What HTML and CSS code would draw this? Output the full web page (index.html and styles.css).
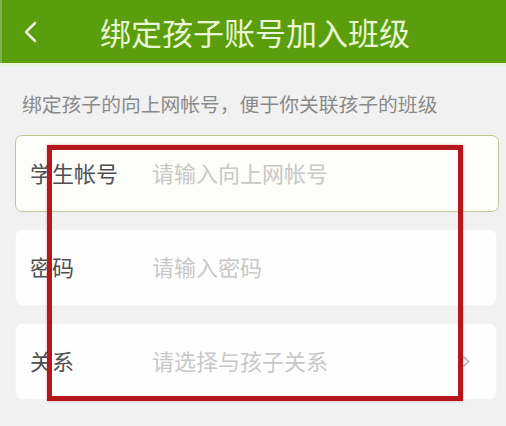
FILE: index.html
```html
<!DOCTYPE html>
<html lang="zh">
<head>
<meta charset="utf-8">
<link rel="stylesheet" href="styles.css">
</head>
<body>
<div class="page">
  <header class="topbar">
    <svg class="back" width="14" height="22" viewBox="0 0 14 22"><path d="M12 2 L3 11 L12 20" fill="none" stroke="#e6f4cf" stroke-width="2.6" stroke-linecap="round" stroke-linejoin="round"/></svg>
    <h1 class="title">绑定孩子账号加入班级</h1>
  </header>
  <div class="divider"></div>
  <p class="hint">绑定孩子的向上网帐号，便于你关联孩子的班级</p>
  <div class="form">
    <div class="field active">
      <span class="label">学生帐号</span>
      <span class="placeholder">请输入向上网帐号</span>
    </div>
    <div class="field">
      <span class="label">密码</span>
      <span class="placeholder">请输入密码</span>
    </div>
    <div class="field">
      <span class="label">关系</span>
      <span class="placeholder">请选择与孩子关系</span>
      <svg class="arrow" width="8" height="13" viewBox="0 0 8 13"><path d="M1.5 1.5 L6.5 6.5 L1.5 11.5" fill="none" stroke="#b0b0b0" stroke-width="1.6"/></svg>
    </div>
    <div class="highlight"></div>
  </div>
</div>
</body>
</html>
```
FILE: styles.css
```css
html, body {
  margin: 0;
  padding: 0;
}
body {
  width: 506px;
  height: 426px;
  overflow: hidden;
  background: #f1f1f1;
  font-family: "Noto Sans CJK SC", "Noto Sans", sans-serif;
}
.page {
  display: flex;
  flex-direction: column;
}
.topbar {
  height: 63px;
  background: #5b9e0d;
  display: flex;
  align-items: center;
  border-left: 2px solid #7fb24a;
}
.back {
  margin-left: 21px;
  margin-top: 1px;
}
.title {
  margin: 0 0 0 63px;
  font-size: 31px;
  font-weight: 400;
  color: #e9f6d4;
  letter-spacing: 0;
  line-height: 1;
}
.divider {
  height: 3px;
  background: #e6f3d6;
}
.hint {
  margin: 24px 0 0 22px;
  font-size: 19.8px;
  line-height: 28px;
  color: #8a8a8a;
}
.form {
  position: relative;
  margin: 17px 7px 0 15px;
  display: flex;
  flex-direction: column;
  gap: 17px;
}
.field {
  height: 77px;
  box-sizing: border-box;
  background: #fefefe;
  border-radius: 7px;
  border: 1px solid #f4f4f4;
  display: flex;
  align-items: center;
  padding: 0 0 4px 14px;
  margin-right: 2px;
}
.field.active {
  border: 1.5px solid #bccb94;
  background: #fdfdf9;
  margin-right: 0;
}
.label {
  width: 122px;
  font-size: 22px;
  color: #505050;
  flex-shrink: 0;
}
.placeholder {
  font-size: 22px;
  color: #c8c8c8;
  flex: 1;
}
.arrow {
  margin-right: 26px;
  margin-top: 4px;
}
.highlight {
  position: absolute;
  left: 32px;
  top: 10px;
  width: 406px;
  height: 246px;
  border: 5px solid #b5171d;
  box-shadow: 0 0 2px rgba(220, 60, 60, 0.5);
}
```
